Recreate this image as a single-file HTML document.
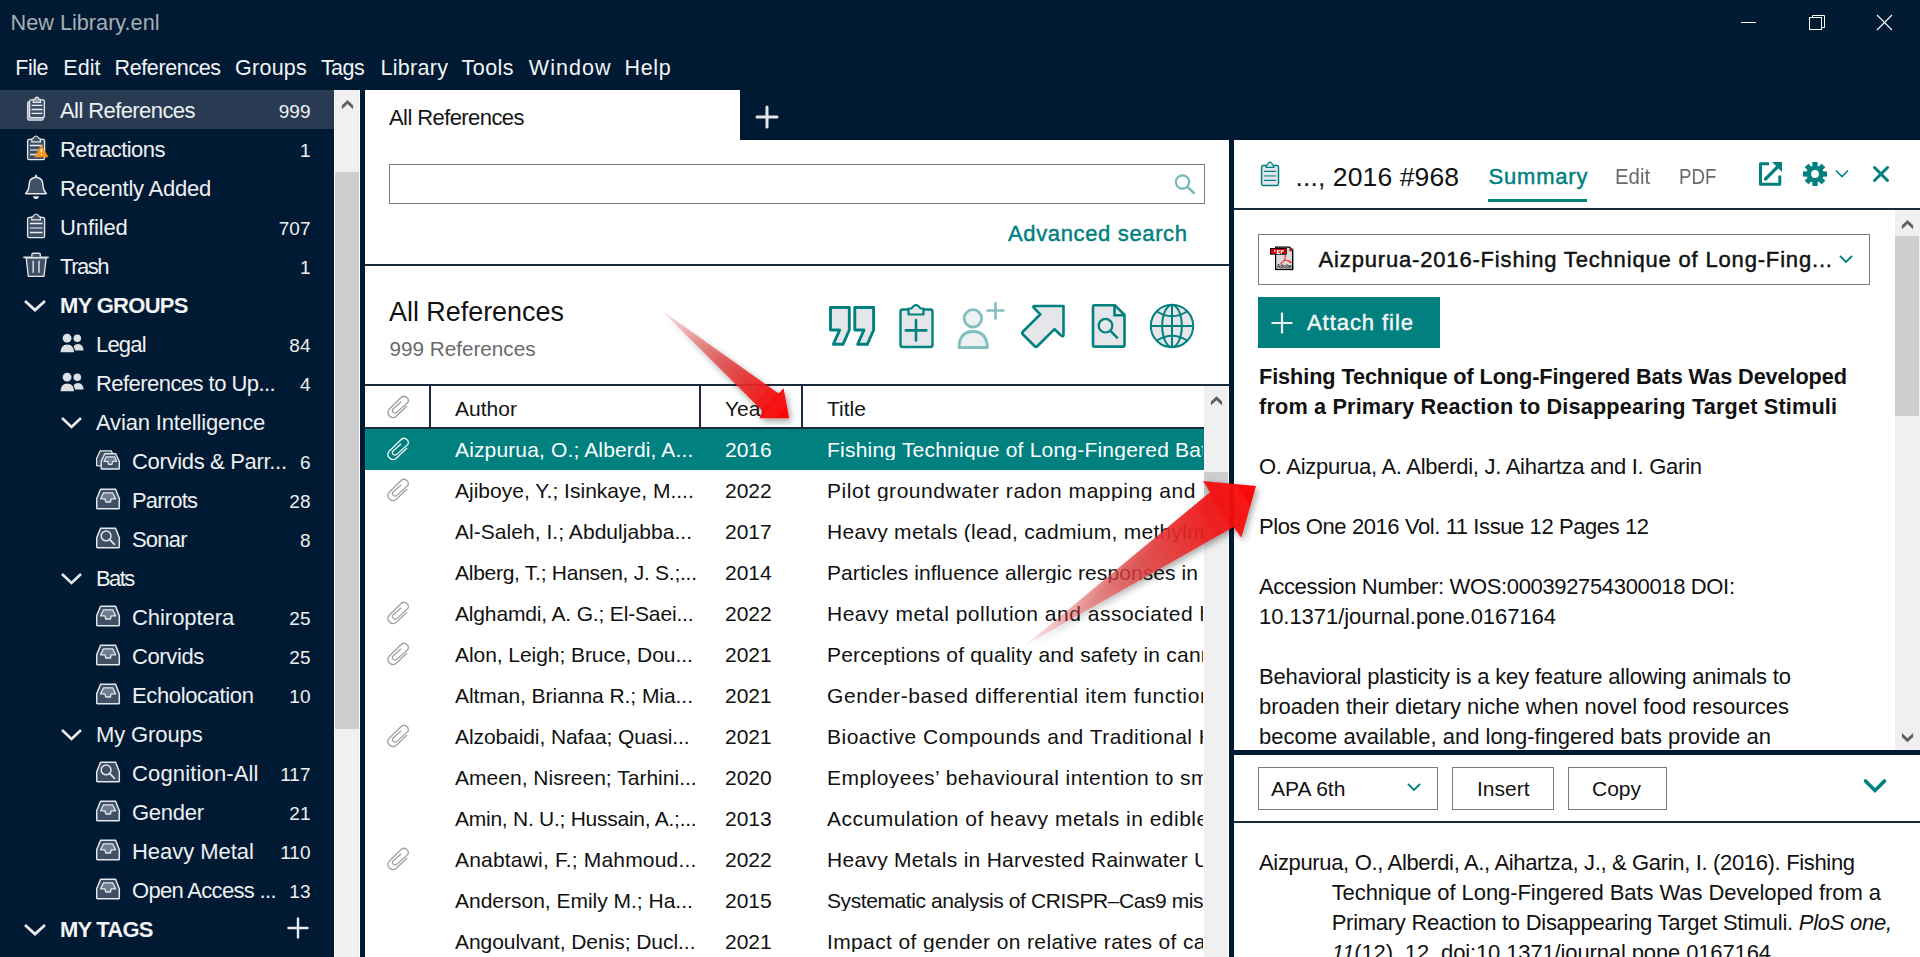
<!DOCTYPE html>
<html><head><meta charset="utf-8"><title>New Library.enl</title>
<style>
html,body{margin:0;padding:0;}
body{width:1920px;height:957px;overflow:hidden;background:#011a33;position:relative;font-family:"Liberation Sans",sans-serif;}
.t{position:absolute;white-space:nowrap;}
.r{position:absolute;}
.a{position:absolute;}
</style></head><body>
<div class="t" style="left:10.5px;top:12px;font-size:21.7px;line-height:21.7px;color:#a6adb4;font-weight:normal;">New Library.enl</div>
<svg class="a" style="left:0;top:0" width="1920" height="45"><line x1="1741" y1="22.5" x2="1756" y2="22.5" stroke="#fff" stroke-width="1"/><rect x="1809.5" y="17.5" width="12" height="12" fill="none" stroke="#fff" stroke-width="1"/><path d="M1812.5 17.5 V15.5 H1824.5 V27.5 H1821.5" fill="none" stroke="#fff" stroke-width="1"/><path d="M1877 15 L1892 30 M1892 15 L1877 30" stroke="#fff" stroke-width="1.1"/></svg>
<div class="t" style="left:15.2px;top:58px;font-size:21.5px;line-height:21.5px;color:#f2f4f6;font-weight:normal;letter-spacing:-0.419px;">File</div>
<div class="t" style="left:63.3px;top:58px;font-size:21.5px;line-height:21.5px;color:#f2f4f6;font-weight:normal;letter-spacing:0.046px;">Edit</div>
<div class="t" style="left:114.55px;top:58px;font-size:21.5px;line-height:21.5px;color:#f2f4f6;font-weight:normal;letter-spacing:-0.378px;">References</div>
<div class="t" style="left:235.10000000000002px;top:58px;font-size:21.5px;line-height:21.5px;color:#f2f4f6;font-weight:normal;letter-spacing:0.237px;">Groups</div>
<div class="t" style="left:320.90000000000003px;top:58px;font-size:21.5px;line-height:21.5px;color:#f2f4f6;font-weight:normal;letter-spacing:-0.541px;">Tags</div>
<div class="t" style="left:380.5px;top:58px;font-size:21.5px;line-height:21.5px;color:#f2f4f6;font-weight:normal;letter-spacing:0.280px;">Library</div>
<div class="t" style="left:461.6px;top:58px;font-size:21.5px;line-height:21.5px;color:#f2f4f6;font-weight:normal;letter-spacing:0.449px;">Tools</div>
<div class="t" style="left:528.8px;top:58px;font-size:21.5px;line-height:21.5px;color:#f2f4f6;font-weight:normal;letter-spacing:1.046px;">Window</div>
<div class="t" style="left:624.5px;top:58px;font-size:21.5px;line-height:21.5px;color:#f2f4f6;font-weight:normal;letter-spacing:0.660px;">Help</div>
<div class="r" style="left:0px;top:90px;width:334px;height:39px;background:#283b52;"></div>
<svg class="a" style="left:20px;top:92px" width="32" height="32" viewBox="0 0 32 32"><rect x="7.6" y="9.6" width="15.6" height="18.6" rx="1.6" fill="#9aa3ad" stroke="#d9dcdf" stroke-width="1.3"/><rect x="9.6" y="7.8" width="14.8" height="17.8" rx="1.4" fill="#3f4f66" stroke="#e6e8ea" stroke-width="1.3"/><path d="M13.3 10.5 V8.2 Q13.3 7 14.8 7 Q15.5 5 16.9 5 Q18.3 5 19 7 Q20.5 7 20.5 8.2 V10.5 Z" fill="#9aa3ad" stroke="#e6e8ea" stroke-width="1.2"/><path d="M11.6 13.3 H22.5 M11.6 17.5 H22.5 M11.6 21.4 H22.5" stroke="#eceef0" stroke-width="1.3"/></svg>
<div class="t" style="left:60px;top:100px;font-size:22px;line-height:22px;color:#eef0f2;font-weight:normal;letter-spacing:-0.583px;">All References</div>
<div class="t" style="left:200px;width:110.5px;text-align:right;top:102px;font-size:19px;line-height:19px;color:#eef0f2">999</div>
<svg class="a" style="left:20px;top:131px" width="32" height="32" viewBox="0 0 32 32"><rect x="7.6" y="8.4" width="17" height="20.2" rx="1.6" fill="#3f4f66" stroke="#e6e8ea" stroke-width="1.3"/><path d="M11.8 10.9 V8.4 Q11.8 7.2 13.3 7.2 Q14.3 5 16.1 5 Q17.9 5 18.9 7.2 Q20.4 7.2 20.4 8.4 V10.9 Z" fill="#3f4f66" stroke="#e6e8ea" stroke-width="1.2"/><path d="M10 14.5 H22.6 M10 23.5 H22.6" stroke="#eceef0" stroke-width="1.3"/><path d="M10 19 H22.6" stroke="#b5bcc4" stroke-width="1.6"/><path d="M21.4 14.3 L28.2 25.9 H14.6 Z" fill="#f7931e" stroke="#f7931e" stroke-width="0.6" stroke-linejoin="round"/><path d="M21.4 18.2 V21.6 M21.4 22.9 V24" stroke="#fff" stroke-width="1.3"/></svg>
<div class="t" style="left:60px;top:139px;font-size:22px;line-height:22px;color:#eef0f2;font-weight:normal;letter-spacing:-0.588px;">Retractions</div>
<div class="t" style="left:200px;width:110.5px;text-align:right;top:141px;font-size:19px;line-height:19px;color:#eef0f2">1</div>
<svg class="a" style="left:20px;top:170px" width="32" height="32" viewBox="0 0 32 32"><path d="M16 5.3 L17 7.6 Q22.6 8.4 22.9 14.5 Q23 20 26.2 23.2 V23.8 H5.8 V23.2 Q9 20 9.1 14.5 Q9.4 8.4 15 7.6 Z" fill="#3f4f66" stroke="#e6e8ea" stroke-width="1.5" stroke-linejoin="round"/><path d="M13 26.2 H19 Q18.5 29 16 29 Q13.5 29 13 26.2 Z" fill="#e6e8ea"/></svg>
<div class="t" style="left:60px;top:178px;font-size:22px;line-height:22px;color:#eef0f2;font-weight:normal;letter-spacing:-0.216px;">Recently Added</div>
<svg class="a" style="left:20px;top:209px" width="32" height="32" viewBox="0 0 32 32"><rect x="7.6" y="8.4" width="17" height="20.2" rx="1.6" fill="#3f4f66" stroke="#e6e8ea" stroke-width="1.3"/><path d="M11.8 10.9 V8.4 Q11.8 7.2 13.3 7.2 Q14.3 5 16.1 5 Q17.9 5 18.9 7.2 Q20.4 7.2 20.4 8.4 V10.9 Z" fill="#3f4f66" stroke="#e6e8ea" stroke-width="1.2"/><path d="M10 14.5 H22.6 M10 23.5 H22.6" stroke="#eceef0" stroke-width="1.3"/><path d="M10 19 H22.6" stroke="#b5bcc4" stroke-width="1.6"/></svg>
<div class="t" style="left:60px;top:217px;font-size:22px;line-height:22px;color:#eef0f2;font-weight:normal;letter-spacing:-0.114px;">Unfiled</div>
<div class="t" style="left:200px;width:110.5px;text-align:right;top:219px;font-size:19px;line-height:19px;color:#eef0f2">707</div>
<svg class="a" style="left:20px;top:248px" width="32" height="32" viewBox="0 0 32 32"><path d="M6.2 9.8 L8.3 28.4 H23.9 L26.2 9.8 Z" fill="#3f4f66" stroke="#e6e8ea" stroke-width="1.3" stroke-linejoin="round"/><path d="M4 9.3 H28" stroke="#dfe2e5" stroke-width="1.8" stroke-linecap="round"/><path d="M11.9 8.8 V6.6 Q11.9 5.3 13.2 5.3 H19 Q20.3 5.3 20.3 6.6 V8.8" fill="#3f4f66" stroke="#dfe2e5" stroke-width="1.4"/><path d="M13.2 13.2 V24.2 M19 13.2 V24.2" stroke="#e6e8ea" stroke-width="1.4" stroke-linecap="round"/></svg>
<div class="t" style="left:60px;top:256px;font-size:22px;line-height:22px;color:#eef0f2;font-weight:normal;letter-spacing:-1.480px;">Trash</div>
<div class="t" style="left:200px;width:110.5px;text-align:right;top:258px;font-size:19px;line-height:19px;color:#eef0f2">1</div>
<svg class="a" style="left:23px;top:299px" width="24" height="14" viewBox="0 0 24 14"><path d="M2 2 L12.0 11 L22 2" fill="none" stroke="#e8eaed" stroke-width="2.8"/></svg>
<div class="t" style="left:60px;top:295px;font-size:22px;line-height:22px;color:#f2f4f6;font-weight:bold;letter-spacing:-0.695px;">MY GROUPS</div>
<svg class="a" style="left:60px;top:333px" width="26" height="22" viewBox="0 0 26 22"><circle cx="7.1" cy="5.2" r="4.4" fill="#dcdfe3"/><circle cx="17.3" cy="5.3" r="3.8" fill="#dcdfe3"/><path d="M12.2 18 Q12 10.5 18 10.5 Q23.8 10.5 24.2 18 Z" fill="#dcdfe3" stroke="#011a33" stroke-width="1.1"/><path d="M-0.2 19.9 Q0.3 11 7.3 11 Q14.3 11 14.8 19.9 Z" fill="#dcdfe3" stroke="#011a33" stroke-width="1.1"/></svg>
<div class="t" style="left:96px;top:334px;font-size:22px;line-height:22px;color:#eef0f2;font-weight:normal;letter-spacing:-0.811px;">Legal</div>
<div class="t" style="left:200px;width:110.5px;text-align:right;top:336px;font-size:19px;line-height:19px;color:#eef0f2">84</div>
<svg class="a" style="left:60px;top:372px" width="26" height="22" viewBox="0 0 26 22"><circle cx="7.1" cy="5.2" r="4.4" fill="#dcdfe3"/><circle cx="17.3" cy="5.3" r="3.8" fill="#dcdfe3"/><path d="M12.2 18 Q12 10.5 18 10.5 Q23.8 10.5 24.2 18 Z" fill="#dcdfe3" stroke="#011a33" stroke-width="1.1"/><path d="M-0.2 19.9 Q0.3 11 7.3 11 Q14.3 11 14.8 19.9 Z" fill="#dcdfe3" stroke="#011a33" stroke-width="1.1"/></svg>
<div class="t" style="left:96px;top:373px;font-size:22px;line-height:22px;color:#eef0f2;font-weight:normal;letter-spacing:-0.547px;">References to Up...</div>
<div class="t" style="left:200px;width:110.5px;text-align:right;top:375px;font-size:19px;line-height:19px;color:#eef0f2">4</div>
<svg class="a" style="left:60px;top:416px" width="23" height="14" viewBox="0 0 23 14"><path d="M2 2 L11.5 11 L21 2" fill="none" stroke="#e8eaed" stroke-width="2.6"/></svg>
<div class="t" style="left:96px;top:412px;font-size:22px;line-height:22px;color:#eef0f2;font-weight:normal;letter-spacing:-0.167px;">Avian Intelligence</div>
<svg class="a" style="left:96px;top:449px" width="26" height="24" viewBox="0 0 26 24"><path d="M4.2 1.8 H15.2 L19 9.5 V16.8 H1.3 Q0.6 16.8 0.6 16 V9.5 Z" fill="#3f4f66" stroke="#e4e7ea" stroke-width="1.3" stroke-linejoin="round"/><path d="M8.8 4.8 H19.6 L23.3 12.4 V19.2 Q23.3 20 22.5 20 H6 Q5.2 20 5.2 19.2 V12.4 Z" fill="#3f4f66" stroke="#e4e7ea" stroke-width="1.4" stroke-linejoin="round"/><path d="M10.2 7.8 H18.6 L20.6 12.4 H16.8 L16 15.4 H12.6 L11.8 12.4 H7.9 Z" fill="#6f7d8e" stroke="#e4e7ea" stroke-width="1.2" stroke-linejoin="round"/></svg>
<div class="t" style="left:132px;top:451px;font-size:22px;line-height:22px;color:#eef0f2;font-weight:normal;letter-spacing:-0.322px;">Corvids &amp; Parr...</div>
<div class="t" style="left:200px;width:110.5px;text-align:right;top:453px;font-size:19px;line-height:19px;color:#eef0f2">6</div>
<svg class="a" style="left:96px;top:488px" width="26" height="24" viewBox="0 0 26 24"><path d="M4.6 1.3 H19.6 L23.3 10.8 V19.9 Q23.3 20.8 22.4 20.8 H1.6 Q0.7 20.8 0.7 19.9 V10.8 Z" fill="#3f4f66" stroke="#e4e7ea" stroke-width="1.5" stroke-linejoin="round"/><path d="M7.6 4.8 H16.6 L19.6 10.8 H15.3 L14.4 14 H9.8 L8.9 10.8 H4.6 Z" fill="#6f7d8e" stroke="#e4e7ea" stroke-width="1.3" stroke-linejoin="round"/></svg>
<div class="t" style="left:132px;top:490px;font-size:22px;line-height:22px;color:#eef0f2;font-weight:normal;letter-spacing:-0.820px;">Parrots</div>
<div class="t" style="left:200px;width:110.5px;text-align:right;top:492px;font-size:19px;line-height:19px;color:#eef0f2">28</div>
<svg class="a" style="left:96px;top:527px" width="26" height="24" viewBox="0 0 26 24"><path d="M4.6 1.3 H19.6 L23.3 10.8 V19.9 Q23.3 20.8 22.4 20.8 H1.6 Q0.7 20.8 0.7 19.9 V10.8 Z" fill="#3f4f66" stroke="#e4e7ea" stroke-width="1.5" stroke-linejoin="round"/><circle cx="10.1" cy="8.9" r="4.9" fill="none" stroke="#e4e7ea" stroke-width="1.5"/><path d="M13.8 12.6 L18.5 17.3" stroke="#e4e7ea" stroke-width="1.7" stroke-linecap="round"/></svg>
<div class="t" style="left:132px;top:529px;font-size:22px;line-height:22px;color:#eef0f2;font-weight:normal;letter-spacing:-0.805px;">Sonar</div>
<div class="t" style="left:200px;width:110.5px;text-align:right;top:531px;font-size:19px;line-height:19px;color:#eef0f2">8</div>
<svg class="a" style="left:60px;top:572px" width="23" height="14" viewBox="0 0 23 14"><path d="M2 2 L11.5 11 L21 2" fill="none" stroke="#e8eaed" stroke-width="2.6"/></svg>
<div class="t" style="left:96px;top:568px;font-size:22px;line-height:22px;color:#eef0f2;font-weight:normal;letter-spacing:-1.577px;">Bats</div>
<svg class="a" style="left:96px;top:605px" width="26" height="24" viewBox="0 0 26 24"><path d="M4.6 1.3 H19.6 L23.3 10.8 V19.9 Q23.3 20.8 22.4 20.8 H1.6 Q0.7 20.8 0.7 19.9 V10.8 Z" fill="#3f4f66" stroke="#e4e7ea" stroke-width="1.5" stroke-linejoin="round"/><path d="M7.6 4.8 H16.6 L19.6 10.8 H15.3 L14.4 14 H9.8 L8.9 10.8 H4.6 Z" fill="#6f7d8e" stroke="#e4e7ea" stroke-width="1.3" stroke-linejoin="round"/></svg>
<div class="t" style="left:132px;top:607px;font-size:22px;line-height:22px;color:#eef0f2;font-weight:normal;letter-spacing:-0.047px;">Chiroptera</div>
<div class="t" style="left:200px;width:110.5px;text-align:right;top:609px;font-size:19px;line-height:19px;color:#eef0f2">25</div>
<svg class="a" style="left:96px;top:644px" width="26" height="24" viewBox="0 0 26 24"><path d="M4.6 1.3 H19.6 L23.3 10.8 V19.9 Q23.3 20.8 22.4 20.8 H1.6 Q0.7 20.8 0.7 19.9 V10.8 Z" fill="#3f4f66" stroke="#e4e7ea" stroke-width="1.5" stroke-linejoin="round"/><path d="M7.6 4.8 H16.6 L19.6 10.8 H15.3 L14.4 14 H9.8 L8.9 10.8 H4.6 Z" fill="#6f7d8e" stroke="#e4e7ea" stroke-width="1.3" stroke-linejoin="round"/></svg>
<div class="t" style="left:132px;top:646px;font-size:22px;line-height:22px;color:#eef0f2;font-weight:normal;letter-spacing:-0.380px;">Corvids</div>
<div class="t" style="left:200px;width:110.5px;text-align:right;top:648px;font-size:19px;line-height:19px;color:#eef0f2">25</div>
<svg class="a" style="left:96px;top:683px" width="26" height="24" viewBox="0 0 26 24"><path d="M4.6 1.3 H19.6 L23.3 10.8 V19.9 Q23.3 20.8 22.4 20.8 H1.6 Q0.7 20.8 0.7 19.9 V10.8 Z" fill="#3f4f66" stroke="#e4e7ea" stroke-width="1.5" stroke-linejoin="round"/><path d="M7.6 4.8 H16.6 L19.6 10.8 H15.3 L14.4 14 H9.8 L8.9 10.8 H4.6 Z" fill="#6f7d8e" stroke="#e4e7ea" stroke-width="1.3" stroke-linejoin="round"/></svg>
<div class="t" style="left:132px;top:685px;font-size:22px;line-height:22px;color:#eef0f2;font-weight:normal;letter-spacing:-0.371px;">Echolocation</div>
<div class="t" style="left:200px;width:110.5px;text-align:right;top:687px;font-size:19px;line-height:19px;color:#eef0f2">10</div>
<svg class="a" style="left:60px;top:728px" width="23" height="14" viewBox="0 0 23 14"><path d="M2 2 L11.5 11 L21 2" fill="none" stroke="#e8eaed" stroke-width="2.6"/></svg>
<div class="t" style="left:96px;top:724px;font-size:22px;line-height:22px;color:#eef0f2;font-weight:normal;letter-spacing:-0.112px;">My Groups</div>
<svg class="a" style="left:96px;top:761px" width="26" height="24" viewBox="0 0 26 24"><path d="M4.6 1.3 H19.6 L23.3 10.8 V19.9 Q23.3 20.8 22.4 20.8 H1.6 Q0.7 20.8 0.7 19.9 V10.8 Z" fill="#3f4f66" stroke="#e4e7ea" stroke-width="1.5" stroke-linejoin="round"/><circle cx="10.1" cy="8.9" r="4.9" fill="none" stroke="#e4e7ea" stroke-width="1.5"/><path d="M13.8 12.6 L18.5 17.3" stroke="#e4e7ea" stroke-width="1.7" stroke-linecap="round"/></svg>
<div class="t" style="left:132px;top:763px;font-size:22px;line-height:22px;color:#eef0f2;font-weight:normal;letter-spacing:0.147px;">Cognition-All</div>
<div class="t" style="left:200px;width:110.5px;text-align:right;top:765px;font-size:19px;line-height:19px;color:#eef0f2">117</div>
<svg class="a" style="left:96px;top:800px" width="26" height="24" viewBox="0 0 26 24"><path d="M4.6 1.3 H19.6 L23.3 10.8 V19.9 Q23.3 20.8 22.4 20.8 H1.6 Q0.7 20.8 0.7 19.9 V10.8 Z" fill="#3f4f66" stroke="#e4e7ea" stroke-width="1.5" stroke-linejoin="round"/><path d="M7.6 4.8 H16.6 L19.6 10.8 H15.3 L14.4 14 H9.8 L8.9 10.8 H4.6 Z" fill="#6f7d8e" stroke="#e4e7ea" stroke-width="1.3" stroke-linejoin="round"/></svg>
<div class="t" style="left:132px;top:802px;font-size:22px;line-height:22px;color:#eef0f2;font-weight:normal;letter-spacing:-0.258px;">Gender</div>
<div class="t" style="left:200px;width:110.5px;text-align:right;top:804px;font-size:19px;line-height:19px;color:#eef0f2">21</div>
<svg class="a" style="left:96px;top:839px" width="26" height="24" viewBox="0 0 26 24"><path d="M4.6 1.3 H19.6 L23.3 10.8 V19.9 Q23.3 20.8 22.4 20.8 H1.6 Q0.7 20.8 0.7 19.9 V10.8 Z" fill="#3f4f66" stroke="#e4e7ea" stroke-width="1.5" stroke-linejoin="round"/><path d="M7.6 4.8 H16.6 L19.6 10.8 H15.3 L14.4 14 H9.8 L8.9 10.8 H4.6 Z" fill="#6f7d8e" stroke="#e4e7ea" stroke-width="1.3" stroke-linejoin="round"/></svg>
<div class="t" style="left:132px;top:841px;font-size:22px;line-height:22px;color:#eef0f2;font-weight:normal;letter-spacing:-0.038px;">Heavy Metal</div>
<div class="t" style="left:200px;width:110.5px;text-align:right;top:843px;font-size:19px;line-height:19px;color:#eef0f2">110</div>
<svg class="a" style="left:96px;top:878px" width="26" height="24" viewBox="0 0 26 24"><path d="M4.6 1.3 H19.6 L23.3 10.8 V19.9 Q23.3 20.8 22.4 20.8 H1.6 Q0.7 20.8 0.7 19.9 V10.8 Z" fill="#3f4f66" stroke="#e4e7ea" stroke-width="1.5" stroke-linejoin="round"/><path d="M7.6 4.8 H16.6 L19.6 10.8 H15.3 L14.4 14 H9.8 L8.9 10.8 H4.6 Z" fill="#6f7d8e" stroke="#e4e7ea" stroke-width="1.3" stroke-linejoin="round"/></svg>
<div class="t" style="left:132px;top:880px;font-size:22px;line-height:22px;color:#eef0f2;font-weight:normal;letter-spacing:-0.684px;">Open Access ...</div>
<div class="t" style="left:200px;width:110.5px;text-align:right;top:882px;font-size:19px;line-height:19px;color:#eef0f2">13</div>
<svg class="a" style="left:23px;top:923px" width="24" height="14" viewBox="0 0 24 14"><path d="M2 2 L12.0 11 L22 2" fill="none" stroke="#e8eaed" stroke-width="2.8"/></svg>
<div class="t" style="left:60px;top:919px;font-size:22px;line-height:22px;color:#f2f4f6;font-weight:bold;letter-spacing:-0.801px;">MY TAGS</div>
<svg class="a" style="left:286px;top:916px" width="24" height="24"><path d="M12 2.5 V21.5 M2.5 12 H21.5" stroke="#e8eaed" stroke-width="2.4" stroke-linecap="round"/></svg>
<div class="r" style="left:334px;top:90px;width:26px;height:867px;background:#f0f0f0;border-left:1px solid #fff;box-sizing:border-box"></div>
<div class="r" style="left:359px;top:90px;width:1px;height:867px;background:#fff;"></div>
<div class="r" style="left:335px;top:172px;width:24px;height:557px;background:#cdcdcd;"></div>
<svg class="a" style="left:0;top:0;overflow:visible" width="1" height="1"><polygon points="341.9,109.2 341.9,105.2 347.5,100 353.1,105.2 353.1,109.2 347.5,104" fill="#606060"/></svg>
<div class="r" style="left:365px;top:90px;width:375px;height:50px;background:#fff;"></div>
<div class="r" style="left:365px;top:140px;width:864px;height:817px;background:#fff;"></div>
<div class="t" style="left:389px;top:107px;font-size:22px;line-height:22px;color:#151515;font-weight:normal;letter-spacing:-0.583px;">All References</div>
<svg class="a" style="left:753px;top:103px" width="28" height="28"><path d="M14 4 V24 M4 14 H24" stroke="#e3e6ea" stroke-width="3" stroke-linecap="round"/></svg>
<div class="r" style="left:389px;top:164px;width:816px;height:40px;background:#fff;border:1px solid #7a7a7a;box-sizing:border-box"></div>
<svg class="a" style="left:1170px;top:170px" width="30" height="30"><circle cx="12.5" cy="12" r="6.6" fill="none" stroke="#74baba" stroke-width="2.2"/><path d="M17 16.6 L24.5 23.5" stroke="#74baba" stroke-width="2.6"/></svg>
<div class="t" style="left:1008px;top:223px;font-size:22px;line-height:22px;color:#00807f;font-weight:normal;letter-spacing:0.643px;-webkit-text-stroke:0.45px #00807f;">Advanced search</div>
<div class="r" style="left:365px;top:264px;width:864px;height:2px;background:#1b2b3f;"></div>
<div class="t" style="left:389px;top:299px;font-size:26.9px;line-height:26.9px;color:#111;font-weight:normal;">All References</div>
<div class="t" style="left:389.5px;top:339px;font-size:20.7px;line-height:20.7px;color:#6a6a6a;font-weight:normal;">999 References</div>
<svg class="a" style="left:820px;top:295px" width="380" height="60" viewBox="820 295 380 60"><path d="M830.5 307.5 H849.3 V330 L843 344.3 H833.3 L839.7 330 H830.5 Z" fill="#e4e6e9" stroke="#00807f" stroke-width="2.9" stroke-linejoin="round"/><path d="M854.8 307.5 H873.6 V330 L867.3 344.3 H857.6 L864 330 H854.8 Z" fill="#e4e6e9" stroke="#00807f" stroke-width="2.9" stroke-linejoin="round"/><rect x="900.5" y="309.5" width="32" height="37.5" rx="2.2" fill="#e4e6e9" stroke="#00807f" stroke-width="2.4"/><path d="M908.5 314.5 V308.5 H911.5 Q916 301.5 920.5 308.5 H923.5 V314.5 Z" fill="#e4e6e9" stroke="#00807f" stroke-width="2.2" stroke-linejoin="round"/><path d="M916 320 V340.5 M905.8 330.4 H926.3" stroke="#00807f" stroke-width="2.6" stroke-linecap="round"/><circle cx="972.9" cy="318.4" r="8.7" fill="#eff0f2" stroke="#82c0c0" stroke-width="2.8"/><path d="M959 347.5 Q959.5 331.5 973 331.5 Q986.5 331.5 987.5 347.5 Z" fill="#eff0f2" stroke="#82c0c0" stroke-width="2.8" stroke-linejoin="round"/><path d="M995.5 303 V318.5 M987.5 310.5 H1003.5" stroke="#82c0c0" stroke-width="2.6" stroke-linecap="round"/><path d="M1034.5 306 H1063.5 V334.5 Q1063.5 337.5 1060.5 335 L1054.5 329.2 L1037.5 346 Q1036 347.5 1034.5 346 L1023 334.5 Q1021.5 333 1023 331.5 L1040.3 314.3 L1034 308 Q1032.5 306 1034.5 306 Z" fill="#e4e6e9" stroke="#00807f" stroke-width="2.6" stroke-linejoin="round"/><path d="M1094.5 305.2 H1114.8 L1124.5 314.9 V345 Q1124.5 346.6 1122.9 346.6 H1094.5 Q1093 346.6 1093 345 V306.8 Q1093 305.2 1094.5 305.2 Z" fill="#e4e6e9" stroke="#00807f" stroke-width="2.6" stroke-linejoin="round"/><path d="M1114.5 305.5 V315.2 H1124.2" fill="none" stroke="#00807f" stroke-width="2.6"/><circle cx="1105.5" cy="325.7" r="6.8" fill="none" stroke="#00807f" stroke-width="2.2"/><path d="M1110.5 330.8 L1117.8 338.3" stroke="#00807f" stroke-width="2.4"/><circle cx="1172" cy="326" r="21.2" fill="#e4e6e9" stroke="#00807f" stroke-width="2"/><ellipse cx="1172" cy="326" rx="9.8" ry="21" fill="none" stroke="#00807f" stroke-width="2"/><path d="M1172 305 V347 M1151 326 H1193" stroke="#00807f" stroke-width="2"/><path d="M1157 311.5 Q1172 321 1187 311.5 M1157 340.5 Q1172 331 1187 340.5" fill="none" stroke="#00807f" stroke-width="2"/></svg>
<div class="r" style="left:365px;top:384px;width:864px;height:2px;background:#1b2b3f;"></div>
<div class="r" style="left:365px;top:427px;width:839px;height:2px;background:#1b2b3f;"></div>
<div class="r" style="left:429px;top:386px;width:2px;height:41px;background:#1b2b3f;"></div>
<div class="r" style="left:699px;top:386px;width:2px;height:41px;background:#1b2b3f;"></div>
<div class="r" style="left:801px;top:386px;width:2px;height:41px;background:#1b2b3f;"></div>
<svg class="a" style="left:384px;top:392px" width="28" height="28" viewBox="0 0 28 28"><path d="M16.7 10.2 L8.5 17.5 A2.7 2.7 0 0 0 12.6 20.6 L24 10.2 A4.3 4.3 0 0 0 16.4 6.3 L5.1 17.3 A5.05 5.05 0 0 0 12.3 24.3 L22.8 14.3" fill="none" stroke="#9b9b9b" stroke-width="1.25" stroke-linecap="round" stroke-linejoin="round"/></svg>
<div class="t" style="left:455px;top:398px;font-size:21px;line-height:21px;color:#151515;font-weight:normal;">Author</div>
<div class="t" style="left:725px;top:398px;font-size:21px;line-height:21px;color:#151515;font-weight:normal;">Year</div>
<div class="t" style="left:827px;top:398px;font-size:21px;line-height:21px;color:#151515;font-weight:normal;">Title</div>
<div class="r" style="left:1204px;top:386px;width:25px;height:571px;background:#f0f0f0;"></div>
<div class="r" style="left:1228px;top:386px;width:1px;height:571px;background:#fff;"></div>
<div class="r" style="left:1204px;top:472px;width:24px;height:43px;background:#cdcdcd;"></div>
<svg class="a" style="left:0;top:0;overflow:visible" width="1" height="1"><polygon points="1210.9,405.4 1210.9,401.4 1216.5,396.2 1222.1,401.4 1222.1,405.4 1216.5,400.2" fill="#606060"/></svg>
<div class="r" style="left:365px;top:429px;width:839px;height:41px;background:#00807f;"></div>
<div class="a" style="left:365px;top:429px;width:839px;height:528px;overflow:hidden">
<svg class="a" style="left:19px;top:4.5px" width="28" height="28" viewBox="0 0 28 28"><path d="M16.7 10.2 L8.5 17.5 A2.7 2.7 0 0 0 12.6 20.6 L24 10.2 A4.3 4.3 0 0 0 16.4 6.3 L5.1 17.3 A5.05 5.05 0 0 0 12.3 24.3 L22.8 14.3" fill="none" stroke="#f4f4f4" stroke-width="1.25" stroke-linecap="round" stroke-linejoin="round"/></svg>
<div class="t" style="left:90px;top:10px;font-size:21px;line-height:21px;color:#fff;font-weight:normal;letter-spacing:0.141px;">Aizpurua, O.; Alberdi, A...</div>
<div class="t" style="left:360px;top:10px;font-size:21px;line-height:21px;color:#fff;font-weight:normal;">2016</div>
<div class="t" style="left:462px;top:10px;font-size:21px;line-height:21px;color:#fff;font-weight:normal;letter-spacing:0.217px;white-space:nowrap;width:376px;overflow:hidden">Fishing Technique of Long-Fingered Bats Was Developed</div>
<svg class="a" style="left:19px;top:45.5px" width="28" height="28" viewBox="0 0 28 28"><path d="M16.7 10.2 L8.5 17.5 A2.7 2.7 0 0 0 12.6 20.6 L24 10.2 A4.3 4.3 0 0 0 16.4 6.3 L5.1 17.3 A5.05 5.05 0 0 0 12.3 24.3 L22.8 14.3" fill="none" stroke="#a0a0a0" stroke-width="1.25" stroke-linecap="round" stroke-linejoin="round"/></svg>
<div class="t" style="left:90px;top:51px;font-size:21px;line-height:21px;color:#111;font-weight:normal;letter-spacing:0.011px;">Ajiboye, Y.; Isinkaye, M....</div>
<div class="t" style="left:360px;top:51px;font-size:21px;line-height:21px;color:#111;font-weight:normal;">2022</div>
<div class="t" style="left:462px;top:51px;font-size:21px;line-height:21px;color:#111;font-weight:normal;letter-spacing:0.534px;white-space:nowrap;width:376px;overflow:hidden">Pilot groundwater radon mapping and associated</div>
<div class="t" style="left:90px;top:92px;font-size:21px;line-height:21px;color:#111;font-weight:normal;letter-spacing:0.045px;">Al-Saleh, I.; Abduljabba...</div>
<div class="t" style="left:360px;top:92px;font-size:21px;line-height:21px;color:#111;font-weight:normal;">2017</div>
<div class="t" style="left:462px;top:92px;font-size:21px;line-height:21px;color:#111;font-weight:normal;letter-spacing:0.290px;white-space:nowrap;width:376px;overflow:hidden">Heavy metals (lead, cadmium, methylmercury)</div>
<div class="t" style="left:90px;top:133px;font-size:21px;line-height:21px;color:#111;font-weight:normal;letter-spacing:-0.265px;">Alberg, T.; Hansen, J. S.;...</div>
<div class="t" style="left:360px;top:133px;font-size:21px;line-height:21px;color:#111;font-weight:normal;">2014</div>
<div class="t" style="left:462px;top:133px;font-size:21px;line-height:21px;color:#111;font-weight:normal;letter-spacing:0.083px;white-space:nowrap;width:376px;overflow:hidden">Particles influence allergic responses in mice</div>
<svg class="a" style="left:19px;top:168.5px" width="28" height="28" viewBox="0 0 28 28"><path d="M16.7 10.2 L8.5 17.5 A2.7 2.7 0 0 0 12.6 20.6 L24 10.2 A4.3 4.3 0 0 0 16.4 6.3 L5.1 17.3 A5.05 5.05 0 0 0 12.3 24.3 L22.8 14.3" fill="none" stroke="#a0a0a0" stroke-width="1.25" stroke-linecap="round" stroke-linejoin="round"/></svg>
<div class="t" style="left:90px;top:174px;font-size:21px;line-height:21px;color:#111;font-weight:normal;letter-spacing:-0.161px;">Alghamdi, A. G.; El-Saei...</div>
<div class="t" style="left:360px;top:174px;font-size:21px;line-height:21px;color:#111;font-weight:normal;">2022</div>
<div class="t" style="left:462px;top:174px;font-size:21px;line-height:21px;color:#111;font-weight:normal;letter-spacing:0.509px;white-space:nowrap;width:376px;overflow:hidden">Heavy metal pollution and associated health</div>
<svg class="a" style="left:19px;top:209.5px" width="28" height="28" viewBox="0 0 28 28"><path d="M16.7 10.2 L8.5 17.5 A2.7 2.7 0 0 0 12.6 20.6 L24 10.2 A4.3 4.3 0 0 0 16.4 6.3 L5.1 17.3 A5.05 5.05 0 0 0 12.3 24.3 L22.8 14.3" fill="none" stroke="#a0a0a0" stroke-width="1.25" stroke-linecap="round" stroke-linejoin="round"/></svg>
<div class="t" style="left:90px;top:215px;font-size:21px;line-height:21px;color:#111;font-weight:normal;letter-spacing:-0.061px;">Alon, Leigh; Bruce, Dou...</div>
<div class="t" style="left:360px;top:215px;font-size:21px;line-height:21px;color:#111;font-weight:normal;">2021</div>
<div class="t" style="left:462px;top:215px;font-size:21px;line-height:21px;color:#111;font-weight:normal;letter-spacing:0.210px;white-space:nowrap;width:376px;overflow:hidden">Perceptions of quality and safety in cannabis</div>
<div class="t" style="left:90px;top:256px;font-size:21px;line-height:21px;color:#111;font-weight:normal;letter-spacing:-0.051px;">Altman, Brianna R.; Mia...</div>
<div class="t" style="left:360px;top:256px;font-size:21px;line-height:21px;color:#111;font-weight:normal;">2021</div>
<div class="t" style="left:462px;top:256px;font-size:21px;line-height:21px;color:#111;font-weight:normal;letter-spacing:0.608px;white-space:nowrap;width:376px;overflow:hidden">Gender-based differential item functioning</div>
<svg class="a" style="left:19px;top:291.5px" width="28" height="28" viewBox="0 0 28 28"><path d="M16.7 10.2 L8.5 17.5 A2.7 2.7 0 0 0 12.6 20.6 L24 10.2 A4.3 4.3 0 0 0 16.4 6.3 L5.1 17.3 A5.05 5.05 0 0 0 12.3 24.3 L22.8 14.3" fill="none" stroke="#a0a0a0" stroke-width="1.25" stroke-linecap="round" stroke-linejoin="round"/></svg>
<div class="t" style="left:90px;top:297px;font-size:21px;line-height:21px;color:#111;font-weight:normal;letter-spacing:-0.091px;">Alzobaidi, Nafaa; Quasi...</div>
<div class="t" style="left:360px;top:297px;font-size:21px;line-height:21px;color:#111;font-weight:normal;">2021</div>
<div class="t" style="left:462px;top:297px;font-size:21px;line-height:21px;color:#111;font-weight:normal;letter-spacing:0.504px;white-space:nowrap;width:376px;overflow:hidden">Bioactive Compounds and Traditional Herbal</div>
<div class="t" style="left:90px;top:338px;font-size:21px;line-height:21px;color:#111;font-weight:normal;letter-spacing:0.019px;">Ameen, Nisreen; Tarhini...</div>
<div class="t" style="left:360px;top:338px;font-size:21px;line-height:21px;color:#111;font-weight:normal;">2020</div>
<div class="t" style="left:462px;top:338px;font-size:21px;line-height:21px;color:#111;font-weight:normal;letter-spacing:0.458px;white-space:nowrap;width:376px;overflow:hidden">Employees’ behavioural intention to smart</div>
<div class="t" style="left:90px;top:379px;font-size:21px;line-height:21px;color:#111;font-weight:normal;letter-spacing:-0.255px;">Amin, N. U.; Hussain, A.;...</div>
<div class="t" style="left:360px;top:379px;font-size:21px;line-height:21px;color:#111;font-weight:normal;">2013</div>
<div class="t" style="left:462px;top:379px;font-size:21px;line-height:21px;color:#111;font-weight:normal;letter-spacing:0.490px;white-space:nowrap;width:376px;overflow:hidden">Accumulation of heavy metals in edible parts</div>
<svg class="a" style="left:19px;top:414.5px" width="28" height="28" viewBox="0 0 28 28"><path d="M16.7 10.2 L8.5 17.5 A2.7 2.7 0 0 0 12.6 20.6 L24 10.2 A4.3 4.3 0 0 0 16.4 6.3 L5.1 17.3 A5.05 5.05 0 0 0 12.3 24.3 L22.8 14.3" fill="none" stroke="#a0a0a0" stroke-width="1.25" stroke-linecap="round" stroke-linejoin="round"/></svg>
<div class="t" style="left:90px;top:420px;font-size:21px;line-height:21px;color:#111;font-weight:normal;letter-spacing:0.189px;">Anabtawi, F.; Mahmoud...</div>
<div class="t" style="left:360px;top:420px;font-size:21px;line-height:21px;color:#111;font-weight:normal;">2022</div>
<div class="t" style="left:462px;top:420px;font-size:21px;line-height:21px;color:#111;font-weight:normal;letter-spacing:0.276px;white-space:nowrap;width:376px;overflow:hidden">Heavy Metals in Harvested Rainwater Used</div>
<div class="t" style="left:90px;top:461px;font-size:21px;line-height:21px;color:#111;font-weight:normal;letter-spacing:-0.012px;">Anderson, Emily M.; Ha...</div>
<div class="t" style="left:360px;top:461px;font-size:21px;line-height:21px;color:#111;font-weight:normal;">2015</div>
<div class="t" style="left:462px;top:461px;font-size:21px;line-height:21px;color:#111;font-weight:normal;letter-spacing:-0.420px;white-space:nowrap;width:376px;overflow:hidden">Systematic analysis of CRISPR–Cas9 mismatch</div>
<div class="t" style="left:90px;top:502px;font-size:21px;line-height:21px;color:#111;font-weight:normal;letter-spacing:-0.045px;">Angoulvant, Denis; Ducl...</div>
<div class="t" style="left:360px;top:502px;font-size:21px;line-height:21px;color:#111;font-weight:normal;">2021</div>
<div class="t" style="left:462px;top:502px;font-size:21px;line-height:21px;color:#111;font-weight:normal;letter-spacing:0.368px;white-space:nowrap;width:376px;overflow:hidden">Impact of gender on relative rates of cardiac</div>
</div>
<div class="r" style="left:1234px;top:140px;width:686px;height:817px;background:#fff;"></div>
<svg class="a" style="left:1258px;top:159px" width="26" height="30" viewBox="0 0 26 30"><rect x="3.6" y="6.6" width="16.9" height="19.8" rx="1.6" fill="#e4e6e9" stroke="#00807f" stroke-width="1.5"/><path d="M8.2 8.4 V6.6 Q8.2 5.8 9.4 5.8 Q10.6 3.2 12 3.2 Q13.4 3.2 14.6 5.8 Q15.8 5.8 15.8 6.6 V8.4 Z" fill="#e4e6e9" stroke="#00807f" stroke-width="1.3"/><path d="M6.5 12.4 H17.6 M6.5 21.4 H17.6" stroke="#00807f" stroke-width="1.3" stroke-linecap="round"/><path d="M6.5 16.9 H17.6" stroke="#5eaaaa" stroke-width="1.6" stroke-linecap="round"/></svg>
<div class="t" style="left:1295.5px;top:164px;font-size:26.5px;line-height:26.5px;color:#111;font-weight:normal;letter-spacing:0.108px;">..., 2016 #968</div>
<div class="t" style="left:1488.5px;top:166px;font-size:22px;line-height:22px;color:#00807f;font-weight:normal;letter-spacing:0.812px;-webkit-text-stroke:0.45px #00807f;">Summary</div>
<div class="r" style="left:1488px;top:199px;width:99px;height:3px;background:#00807f;"></div>
<div class="t" style="left:1614.5px;top:167px;font-size:21.5px;line-height:21.5px;color:#6b6b6b;font-weight:normal;transform:scaleX(0.95);transform-origin:0 0;">Edit</div>
<div class="t" style="left:1679px;top:167px;font-size:21.5px;line-height:21.5px;color:#6b6b6b;font-weight:normal;transform:scaleX(0.87);transform-origin:0 0;">PDF</div>
<svg class="a" style="left:1750px;top:155px" width="150" height="40" viewBox="1750 155 150 40"><path d="M1769 163.8 H1760.5 V184.3 H1779.8 V175.5" fill="none" stroke="#00807f" stroke-width="3" stroke-linejoin="round"/><path d="M1765.5 179 L1780 164.5" stroke="#00807f" stroke-width="3.2" stroke-linecap="round"/><path d="M1772 162 H1782 V172 Z" fill="#00807f"/><g transform="translate(1815,174)"><rect x="-2.6" y="-12" width="5.2" height="6" fill="#00807f" transform="rotate(0)"/><rect x="-2.6" y="-12" width="5.2" height="6" fill="#00807f" transform="rotate(45)"/><rect x="-2.6" y="-12" width="5.2" height="6" fill="#00807f" transform="rotate(90)"/><rect x="-2.6" y="-12" width="5.2" height="6" fill="#00807f" transform="rotate(135)"/><rect x="-2.6" y="-12" width="5.2" height="6" fill="#00807f" transform="rotate(180)"/><rect x="-2.6" y="-12" width="5.2" height="6" fill="#00807f" transform="rotate(225)"/><rect x="-2.6" y="-12" width="5.2" height="6" fill="#00807f" transform="rotate(270)"/><rect x="-2.6" y="-12" width="5.2" height="6" fill="#00807f" transform="rotate(315)"/><circle r="8.6" fill="#00807f"/><circle r="3.9" fill="#fff"/></g><path d="M1836 170.5 L1842 176.5 L1848 170.5" fill="none" stroke="#00807f" stroke-width="1.6"/><path d="M1874.5 167.5 L1887.5 180.5 M1887.5 167.5 L1874.5 180.5" stroke="#00807f" stroke-width="3" stroke-linecap="round"/></svg>
<div class="r" style="left:1234px;top:208px;width:686px;height:2px;background:#1b2b3f;"></div>
<div class="r" style="left:1895px;top:210px;width:25px;height:540px;background:#f0f0f0;"></div>
<div class="r" style="left:1895px;top:236px;width:24px;height:180px;background:#cdcdcd;"></div>
<svg class="a" style="left:0;top:0;overflow:visible" width="1" height="1"><polygon points="1901.9,229.2 1901.9,225.2 1907.5,220 1913.1,225.2 1913.1,229.2 1907.5,224" fill="#606060"/></svg>
<svg class="a" style="left:0;top:0;overflow:visible" width="1" height="1"><polygon points="1901.9,733 1901.9,737 1907.5,742.2 1913.1,737 1913.1,733 1907.5,738.2" fill="#606060"/></svg>
<div class="r" style="left:1258px;top:234px;width:612px;height:51px;background:#fff;border:1px solid #7a7a7a;box-sizing:border-box"></div>
<svg class="a" style="left:1264px;top:242px" width="36" height="34" viewBox="0 0 36 34"><rect x="12.6" y="6.2" width="17.2" height="22.3" fill="#777" opacity="0.55"/><path d="M11.6 5.2 H25.6 L28.6 8.2 V27.3 H11.6 Z" fill="#dadada" stroke="#000" stroke-width="1.2"/><path d="M25.3 6 L28.4 9.2 H25.3 Z" fill="#d40000"/><rect x="6" y="6" width="16.8" height="6.7" fill="#000"/><rect x="6.9" y="6.9" width="15" height="4.9" fill="#d6000a"/><rect x="10" y="8.2" width="1.4" height="1.4" fill="#fff"/><path d="M15.9 8.9 H13.4 V11.4 H15.9 M17.3 11.6 V8.9 H19.8" fill="none" stroke="#fff" stroke-width="1.3"/><path d="M16.3 22.3 Q18.6 19.6 20.5 18.3 Q21.4 15.8 21.3 13 M20.5 18.3 Q24.2 17.8 27.2 20.2 Q26.3 21.2 24.8 19.4" fill="none" stroke="#ff2a2a" stroke-width="1.15"/><text x="12.8" y="26.4" font-family="Liberation Sans" font-weight="bold" font-size="5.6" fill="#111" textLength="15" lengthAdjust="spacingAndGlyphs">Adobe</text></svg>
<div class="t" style="left:1318.6px;top:249px;font-size:22px;line-height:22px;color:#111;font-weight:normal;letter-spacing:0.827px;-webkit-text-stroke:0.45px #111;">Aizpurua-2016-Fishing Technique of Long-Fing...</div>
<svg class="a" style="left:1838px;top:253px" width="16" height="12"><path d="M2 3 L8 9 L14 3" fill="none" stroke="#00807f" stroke-width="1.8"/></svg>
<div class="r" style="left:1258px;top:297px;width:182px;height:51px;background:#00807f;"></div>
<svg class="a" style="left:1268px;top:309px" width="28" height="28"><path d="M14 3.5 V24.5 M3.5 14 H24.5" stroke="#eef0f2" stroke-width="2.2"/></svg>
<div class="t" style="left:1307px;top:312px;font-size:22px;line-height:22px;color:#f4f5f6;font-weight:normal;letter-spacing:0.939px;-webkit-text-stroke:0.45px #f4f5f6;">Attach file</div>
<div class="t" style="left:1259px;top:366px;font-size:21.7px;line-height:21.7px;color:#111;font-weight:bold;letter-spacing:-0.093px;">Fishing Technique of Long-Fingered Bats Was Developed</div>
<div class="t" style="left:1259px;top:396px;font-size:21.7px;line-height:21.7px;color:#111;font-weight:bold;letter-spacing:0.158px;">from a Primary Reaction to Disappearing Target Stimuli</div>
<div class="t" style="left:1259px;top:456px;font-size:22px;line-height:22px;color:#111;font-weight:normal;letter-spacing:-0.274px;">O. Aizpurua, A. Alberdi, J. Aihartza and I. Garin</div>
<div class="t" style="left:1259px;top:516px;font-size:22px;line-height:22px;color:#111;font-weight:normal;letter-spacing:-0.412px;">Plos One 2016 Vol. 11 Issue 12 Pages 12</div>
<div class="t" style="left:1259px;top:576px;font-size:22px;line-height:22px;color:#111;font-weight:normal;letter-spacing:-0.351px;">Accession Number: WOS:000392754300018 DOI:</div>
<div class="t" style="left:1259px;top:606px;font-size:22px;line-height:22px;color:#111;font-weight:normal;letter-spacing:-0.056px;">10.1371/journal.pone.0167164</div>
<div class="a" style="left:1234px;top:640px;width:661px;height:110px;overflow:hidden">
<div class="t" style="left:25px;top:26px;font-size:22px;line-height:22px;color:#111;font-weight:normal;letter-spacing:-0.171px;">Behavioral plasticity is a key feature allowing animals to</div>
<div class="t" style="left:25px;top:56px;font-size:22px;line-height:22px;color:#111;font-weight:normal;letter-spacing:0.009px;">broaden their dietary niche when novel food resources</div>
<div class="t" style="left:25px;top:86px;font-size:22px;line-height:22px;color:#111;font-weight:normal;letter-spacing:0.015px;">become available, and long-fingered bats provide an</div>
</div>
<div class="r" style="left:1234px;top:750px;width:686px;height:5px;background:#011a33;"></div>
<div class="r" style="left:1258px;top:767px;width:180px;height:43px;background:#fff;border:1px solid #7a7a7a;box-sizing:border-box"></div>
<div class="t" style="left:1271px;top:778px;font-size:21px;line-height:21px;color:#111;font-weight:normal;">APA 6th</div>
<svg class="a" style="left:1406px;top:781px" width="16" height="12"><path d="M2 3 L8 9 L14 3" fill="none" stroke="#00807f" stroke-width="1.8"/></svg>
<div class="r" style="left:1452px;top:767px;width:102px;height:43px;background:#fff;border:1px solid #7a7a7a;box-sizing:border-box"></div>
<div class="t" style="left:1477px;top:778px;font-size:21px;line-height:21px;color:#111;font-weight:normal;">Insert</div>
<div class="r" style="left:1568px;top:767px;width:99px;height:43px;background:#fff;border:1px solid #7a7a7a;box-sizing:border-box"></div>
<div class="t" style="left:1592px;top:778px;font-size:21px;line-height:21px;color:#111;font-weight:normal;">Copy</div>
<svg class="a" style="left:1862px;top:777px" width="26" height="20"><path d="M3.5 4 L13 13.5 L22.5 4" fill="none" stroke="#00807f" stroke-width="3.6" stroke-linecap="round"/></svg>
<div class="r" style="left:1234px;top:821px;width:686px;height:2px;background:#1b2b3f;"></div>
<div class="t" style="left:1259px;top:852px;font-size:22px;line-height:22px;color:#111;font-weight:normal;letter-spacing:-0.339px;">Aizpurua, O., Alberdi, A., Aihartza, J., &amp; Garin, I. (2016). Fishing</div>
<div class="t" style="left:1331.7px;top:882px;font-size:22px;line-height:22px;color:#111;font-weight:normal;letter-spacing:-0.076px;">Technique of Long-Fingered Bats Was Developed from a</div>
<div class="t" style="left:1331.7px;top:912px;font-size:22px;line-height:22px;color:#111;font-weight:normal;letter-spacing:-0.267px;">Primary Reaction to Disappearing Target Stimuli. <i>PloS one,</i></div>
<div class="t" style="left:1331.7px;top:942px;font-size:22px;line-height:22px;color:#111;font-weight:normal;letter-spacing:-0.129px;"><i>11</i>(12), 12. doi:10.1371/journal.pone.0167164</div>
<svg class="a" style="left:0;top:0" width="1920" height="957" viewBox="0 0 1920 957"><defs><filter id="sh" x="-20%" y="-20%" width="140%" height="140%"><feGaussianBlur in="SourceAlpha" stdDeviation="3.5"/><feOffset dx="2" dy="3"/><feComponentTransfer><feFuncA type="linear" slope="0.4"/></feComponentTransfer><feMerge><feMergeNode/><feMergeNode in="SourceGraphic"/></feMerge></filter><linearGradient id="g1" gradientUnits="userSpaceOnUse" x1="661" y1="310" x2="789" y2="418"><stop offset="0" stop-color="#e04a4a" stop-opacity="0.12"/><stop offset="0.5" stop-color="#e04040" stop-opacity="0.82"/><stop offset="0.8" stop-color="#f01818" stop-opacity="0.95"/><stop offset="1" stop-color="#ff0000" stop-opacity="0.98"/></linearGradient><linearGradient id="g2" gradientUnits="userSpaceOnUse" x1="1025" y1="645.6" x2="1256" y2="486"><stop offset="0" stop-color="#e04a4a" stop-opacity="0.12"/><stop offset="0.5" stop-color="#e04040" stop-opacity="0.82"/><stop offset="0.8" stop-color="#f01818" stop-opacity="0.93"/><stop offset="1" stop-color="#ff0000" stop-opacity="0.95"/></linearGradient></defs><polygon filter="url(#sh)" fill="url(#g1)" points="661,310 778.6,393.5 783.6,388.2 789.2,418.3 759.2,418.3 762.5,411"/><polygon filter="url(#sh)" fill="url(#g2)" points="1025,645.6 1210,492.2 1203,480.9 1256,485.9 1241.4,537.7 1233.5,526.9"/></svg>
</body></html>
